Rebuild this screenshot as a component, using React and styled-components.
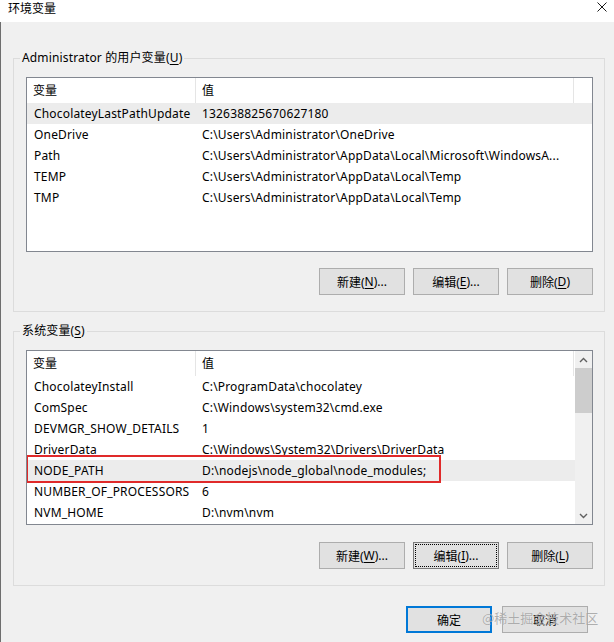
import React from "react";
import styled, { createGlobalStyle } from "styled-components";

const Global = createGlobalStyle`
  html, body { margin: 0; padding: 0; background: #f0f0f0; }
  body {
    font-family: "Segoe UI", "Noto Sans", "Noto Sans CJK SC", sans-serif;
    font-size: 12px;
    color: #000;
  }
  #root { width: 614px; height: 642px; overflow: hidden; }
  * { box-sizing: border-box; }
`;

const Window = styled.div`
  width: 614px;
  height: 642px;
  display: flex;
  flex-direction: column;
  background: #f0f0f0;
  position: relative;
  overflow: hidden;
`;

const TitleBar = styled.div`
  height: 22px;
  flex: none;
  background: #fff;
  display: flex;
  align-items: flex-start;
  justify-content: space-between;
  padding: 0 7px 0 8px;
  line-height: 16px;
  font-family: "Noto Sans CJK SC", sans-serif;
`;

const CloseIcon = styled.svg`
  width: 10px;
  height: 10px;
  margin-top: 2px;
`;

const Body = styled.div`
  flex: 1;
  border-left: 1px solid #6e6e6e;
  padding: 28px 9px 0 12px;
  display: flex;
  flex-direction: column;
`;

const Group = styled.fieldset`
  margin: ${(p) => p.$mt || 0}px 0 0 0;
  padding: 11px 11px 16px 12px;
  border: 1px solid #dcdcdc;
  min-width: 0;
  display: flex;
  flex-direction: column;
`;

const Legend = styled.legend`
  margin-left: -6px;
  padding: 0 2px;
  line-height: 16px;
  font-size: 12px;
  letter-spacing: 0.15px;
`;

const U = styled.span`
  text-decoration: underline;
  text-underline-offset: 2px;
`;

const ListBox = styled.div`
  height: 175px;
  border: 1px solid #828790;
  background: #fff;
  display: flex;
  overflow: hidden;
`;

const ListMain = styled.div`
  flex: 1;
  min-width: 0;
  display: flex;
  flex-direction: column;
`;

const HeaderRow = styled.div`
  display: grid;
  grid-template-columns: 169px 378px;
  height: 25px;
  flex: none;
`;

const HeaderCell = styled.div`
  padding: 0 6px 2px;
  display: flex;
  align-items: center;
  border-right: 1px solid #e5e5e5;
  font-family: "Noto Sans CJK SC", sans-serif;
`;

const Row = styled.div`
  position: relative;
  display: grid;
  grid-template-columns: 169px 378px;
  height: 21px;
  line-height: 21px;
  flex: none;
  letter-spacing: 0.17px;
  background: ${(p) => (p.$sel ? "#ececec" : "transparent")};
`;

const Cell = styled.div`
  padding-left: ${(p) => (p.$first ? 7 : 6)}px;
  white-space: nowrap;
  overflow: hidden;
`;

const Highlight = styled.div`
  position: absolute;
  left: -1px;
  top: -5px;
  width: 415px;
  height: 28px;
  border: 2px solid #e02a2a;
  pointer-events: none;
`;

const ScrollBar = styled.div`
  width: 17px;
  flex: none;
  background: #f0f0f0;
  display: flex;
  flex-direction: column;
`;

const ScrollArrow = styled.div`
  height: 17px;
  flex: none;
  display: flex;
  align-items: center;
  justify-content: center;
`;

const Track = styled.div`
  flex: 1;
  display: flex;
  flex-direction: column;
`;

const Thumb = styled.div`
  height: 45px;
  background: #cdcdcd;
`;

const ButtonRow = styled.div`
  display: flex;
  justify-content: flex-end;
  gap: ${(p) => p.$gap || 8}px;
  margin-top: ${(p) => p.$mt || 16}px;
  margin-right: ${(p) => p.$mr || 0}px;
`;

const Button = styled.button`
  position: relative;
  width: 86px;
  height: 27px;
  padding: 0;
  background: #e1e1e1;
  border: ${(p) => (p.$default ? "2px solid #0078d7" : p.$focus ? "1px solid #7a7a7a" : "1px solid #adadad")};
  font-family: "Segoe UI", "Noto Sans", "Noto Sans CJK SC", sans-serif;
  font-size: 12px;
  color: #000;
  display: flex;
  align-items: center;
  justify-content: center;
  outline: ${(p) => (p.$focus ? "1px dotted #000" : "none")};
  outline-offset: -3px;
`;

const Watermark = styled.div`
  position: absolute;
  left: 482px;
  top: 609px;
  font-family: "Noto Sans CJK SC", sans-serif;
  font-size: 13px;
  line-height: 18px;
  color: rgba(150, 150, 150, 0.75);
  text-shadow: 0 0 1px rgba(255, 255, 255, 0.6);
  pointer-events: none;
  white-space: nowrap;
`;

const Chevron = ({ up }) => (
  <svg width="9" height="6" viewBox="0 0 9 6">
    <path
      d={up ? "M1 5 L4.5 1.5 L8 5" : "M1 1 L4.5 4.5 L8 1"}
      fill="none"
      stroke="#606060"
      strokeWidth="1.4"
    />
  </svg>
);

const userVars = [
  ["ChocolateyLastPathUpdate", "132638825670627180", true],
  ["OneDrive", "C:\\Users\\Administrator\\OneDrive"],
  ["Path", "C:\\Users\\Administrator\\AppData\\Local\\Microsoft\\WindowsA..."],
  ["TEMP", "C:\\Users\\Administrator\\AppData\\Local\\Temp"],
  ["TMP", "C:\\Users\\Administrator\\AppData\\Local\\Temp"],
];

const sysVars = [
  ["ChocolateyInstall", "C:\\ProgramData\\chocolatey"],
  ["ComSpec", "C:\\Windows\\system32\\cmd.exe"],
  ["DEVMGR_SHOW_DETAILS", "1"],
  ["DriverData", "C:\\Windows\\System32\\Drivers\\DriverData"],
  ["NODE_PATH", "D:\\nodejs\\node_global\\node_modules;", true, true],
  ["NUMBER_OF_PROCESSORS", "6"],
  ["NVM_HOME", "D:\\nvm\\nvm"],
];

function VarList({ rows, scroll }) {
  return (
    <ListBox>
      <ListMain>
        <HeaderRow>
          <HeaderCell>变量</HeaderCell>
          <HeaderCell>值</HeaderCell>
        </HeaderRow>
        {rows.map(([k, v, sel, mark]) => (
          <Row key={k} $sel={sel}>
            <Cell $first>{k}</Cell>
            <Cell>{v}</Cell>
            {mark && <Highlight />}
          </Row>
        ))}
      </ListMain>
      {scroll && (
        <ScrollBar>
          <ScrollArrow>
            <Chevron up />
          </ScrollArrow>
          <Track>
            <Thumb />
          </Track>
          <ScrollArrow>
            <Chevron />
          </ScrollArrow>
        </ScrollBar>
      )}
    </ListBox>
  );
}

export default function App() {
  return (
    <Window>
      <Global />
      <TitleBar>
        <span>环境变量</span>
        <CloseIcon viewBox="0 0 10 10">
          <path d="M0.5 0.5 L9.5 9.5 M9.5 0.5 L0.5 9.5" stroke="#1a1a1a" strokeWidth="1" />
        </CloseIcon>
      </TitleBar>
      <Body>
        <Group>
          <Legend>
            Administrator 的用户变量(<U>U</U>)
          </Legend>
          <VarList rows={userVars} />
          <ButtonRow>
            <Button>
              新建(<U>N</U>)...
            </Button>
            <Button>
              编辑(<U>E</U>)...
            </Button>
            <Button>
              删除(<U>D</U>)
            </Button>
          </ButtonRow>
        </Group>
        <Group $mt={11}>
          <Legend>
            系统变量(<U>S</U>)
          </Legend>
          <VarList rows={sysVars} scroll />
          <ButtonRow $mt={17}>
            <Button>
              新建(<U>W</U>)...
            </Button>
            <Button $focus>
              编辑(<U>I</U>)...
            </Button>
            <Button>
              删除(<U>L</U>)
            </Button>
          </ButtonRow>
        </Group>
        <ButtonRow $mt={20} $gap={10} $mr={17}>
          <Button $default>确定</Button>
          <Button>取消</Button>
        </ButtonRow>
      </Body>
      <Watermark>@稀土掘金技术社区</Watermark>
    </Window>
  );
}
